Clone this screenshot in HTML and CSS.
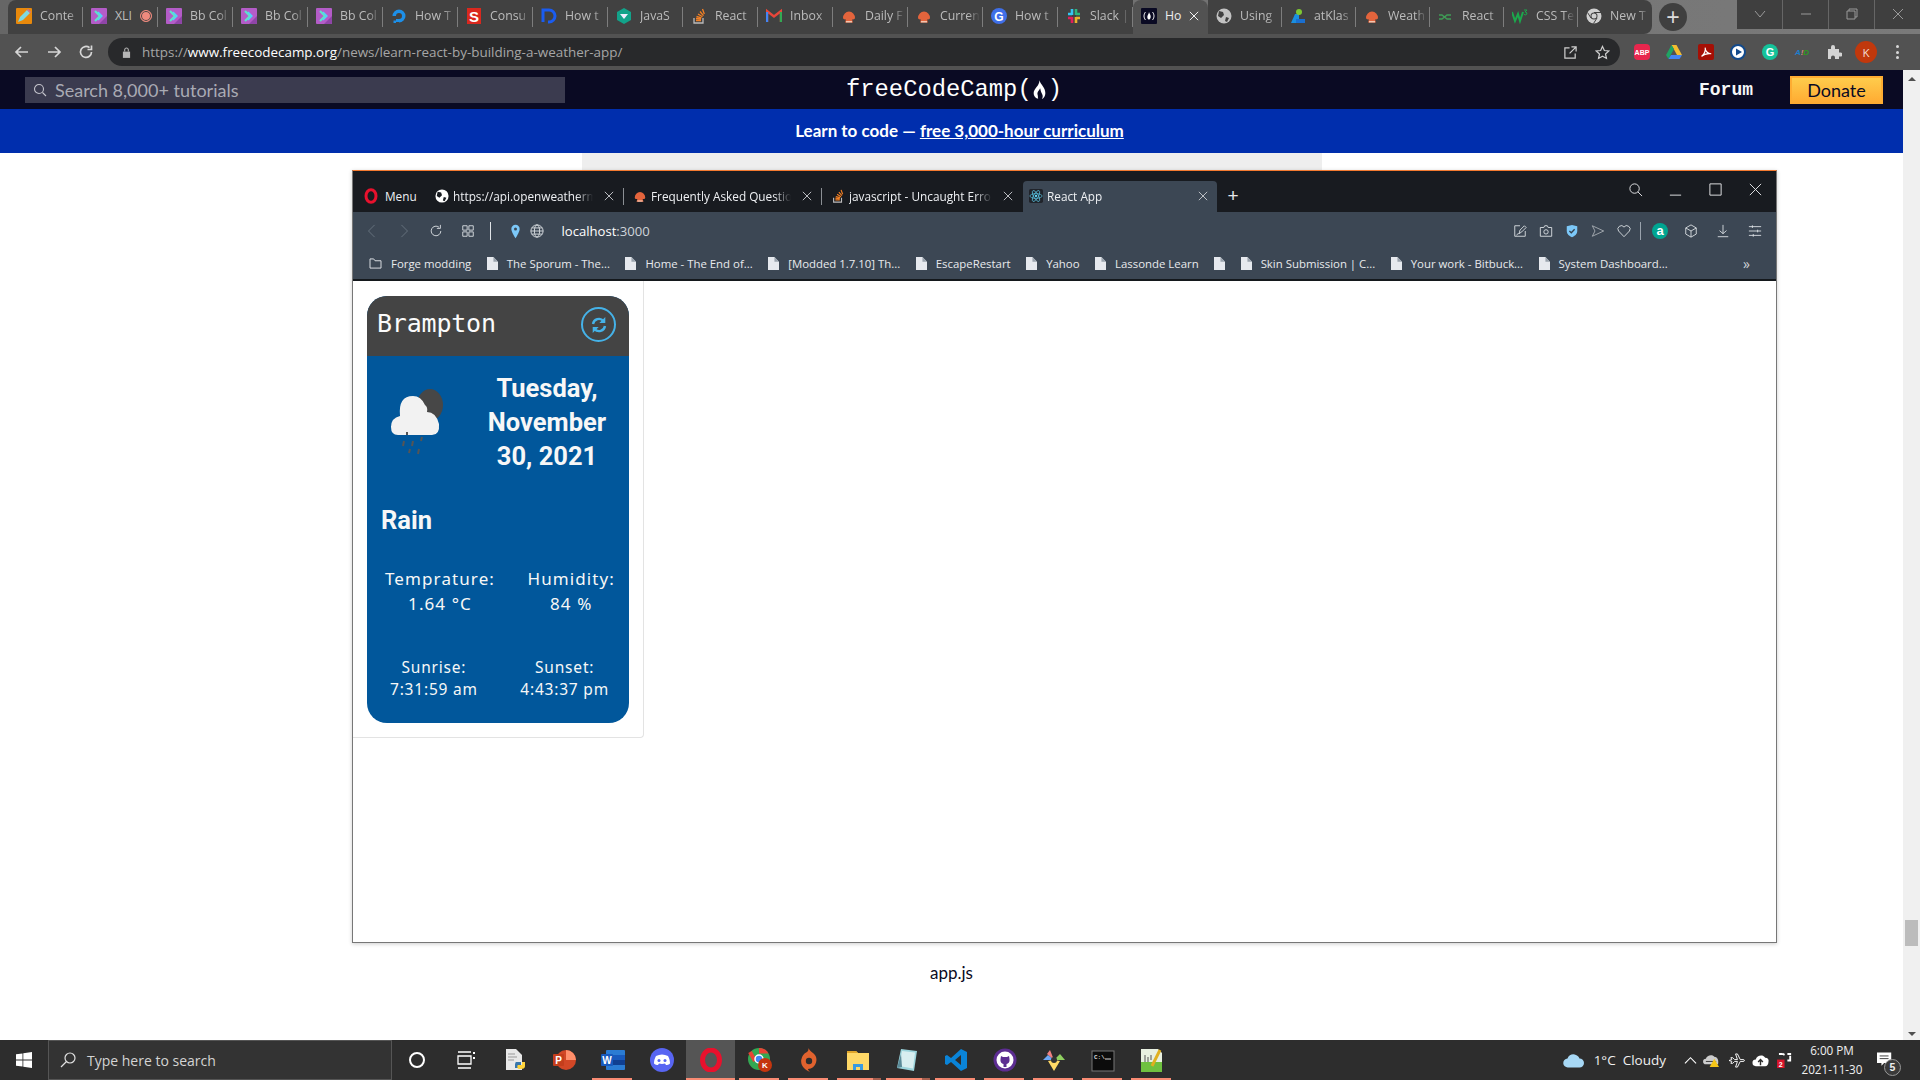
FILE: index.html
```html
<!DOCTYPE html>
<html lang="en">
<head>
<meta charset="utf-8">
<title>Learn React by Building a Weather App</title>
<link rel="stylesheet" href="styles.css">
</head>
<body>
<svg class="defs" width="0" height="0" aria-hidden="true">
  <symbol id="bb" viewBox="0 0 16 16"><rect width="16" height="16" rx="1" fill="#b45cc8"/><path d="M8 16l8-8v7a1 1 0 0 1-1 1z" fill="#8f45a8"/><path d="M4 3l5 5-5 5" fill="none" stroke="#5fe3c8" stroke-width="2.2"/><path d="M7 4l4 4-4 4" fill="none" stroke="#4fd4ff" stroke-width="1.4"/></symbol>
  <symbol id="mush" viewBox="0 0 16 16"><path d="M2 10a6 6.500 0 0 1 12 0c0 1.500-2 1.500-3 1.500l1 3H4l1-3c-1 0-3 0-3-1.500z" fill="#e3643c"/><path d="M5 13h6v1.500H5z" fill="#f3c6b0"/></symbol>
  <symbol id="so" viewBox="0 0 16 16"><path d="M3 10v5h9v-5" fill="none" stroke="#bcbbbb" stroke-width="1.300"/><path d="M5 12.500h5M5 10.500l5 .5M5.500 8.500l5 1.300M7 6l4.500 2.800M9 3.500l3.500 4.200M11.500 1l1.800 5" stroke="#f48024" stroke-width="1.300" fill="none"/></symbol>
  <symbol id="doc" viewBox="0 0 12 14"><path d="M0 0h7l5 5v9H0z" fill="#e6e9ee"/><path d="M7 0l5 5H7z" fill="#9aa3ad"/></symbol>
  <symbol id="x" viewBox="0 0 12 12"><path d="M1 1l10 10M11 1L1 11" stroke="currentColor" stroke-width="1.100" fill="none"/></symbol>
  <symbol id="globe" viewBox="0 0 16 16"><circle cx="8" cy="8" r="7" fill="none" stroke="currentColor" stroke-width="1"/><ellipse cx="8" cy="8" rx="3" ry="7" fill="none" stroke="currentColor" stroke-width="1"/><path d="M1 8h14M2 4.500h12M2 11.500h12" stroke="currentColor" stroke-width="1"/></symbol>
</svg>

<div class="tabstrip">
  <div class="tab first"><svg class="fav" viewBox="0 0 16 16"><rect width="16" height="16" rx="1" fill="#e8890c"/><path d="M2 14l2-5 7-7 3 3-7 7z" fill="#7fd9e0"/><path d="M11 2l3 3 1-1-3-3z" fill="#c86aa8"/></svg><span class="tabtext">Conte</span></div>
  <div class="tab"><svg class="fav"><use href="#bb"/></svg><span class="tabtext short">XLI</span><span class="rec"></span></div>
  <div class="tab"><svg class="fav"><use href="#bb"/></svg><span class="tabtext">Bb Col</span></div>
  <div class="tab"><svg class="fav"><use href="#bb"/></svg><span class="tabtext">Bb Col</span></div>
  <div class="tab"><svg class="fav"><use href="#bb"/></svg><span class="tabtext">Bb Col</span></div>
  <div class="tab"><svg class="fav" viewBox="0 0 16 16"><path d="M8 14.500A6.500 6.500 0 1 0 1.500 8H5a3 3 0 1 1 3 3z" fill="#1d8fe8"/><path d="M5 11h3v3H5zM2.500 12.500H5V15H2.500z" fill="#1d8fe8"/></svg><span class="tabtext">How T</span></div>
  <div class="tab"><svg class="fav" viewBox="0 0 16 16"><rect x="1" width="14" height="16" fill="#d9281e"/><text class="favs" x="8" y="14" text-anchor="middle">S</text></svg><span class="tabtext">Consu</span></div>
  <div class="tab"><svg class="fav" viewBox="0 0 16 16"><path d="M2 14V2h6a6 6 0 0 1 0 12H7" fill="none" stroke="#1a5cf0" stroke-width="3"/></svg><span class="tabtext">How t</span></div>
  <div class="tab"><svg class="fav" viewBox="0 0 16 16"><path d="M8 0l7 4v8l-7 4-7-4V4z" fill="#12a38a"/><path d="M4 6h8l-4 5z" fill="#eef"/></svg><span class="tabtext">JavaS</span></div>
  <div class="tab"><svg class="fav"><use href="#so"/></svg><span class="tabtext">React</span></div>
  <div class="tab"><svg class="fav" viewBox="0 0 16 16"><path d="M1 14V3l7 5.500L15 3v11" fill="none" stroke="#e8463a" stroke-width="2.400"/><path d="M1 14V4" stroke="#4385f4" stroke-width="2.400"/><path d="M15 14V4" stroke="#34a853" stroke-width="2.400"/></svg><span class="tabtext">Inbox</span></div>
  <div class="tab"><svg class="fav"><use href="#mush"/></svg><span class="tabtext">Daily F</span></div>
  <div class="tab"><svg class="fav"><use href="#mush"/></svg><span class="tabtext">Curren</span></div>
  <div class="tab"><svg class="fav" viewBox="0 0 16 16"><circle cx="8" cy="8" r="8" fill="#3f6fe8"/><text class="favg" x="8" y="12.500" text-anchor="middle">G</text></svg><span class="tabtext">How t</span></div>
  <div class="tab"><svg class="fav" viewBox="0 0 16 16"><path d="M6 1v6M2 6h4" stroke="#36c5f0" stroke-width="2.600"/><path d="M10 1v6M10 6h4" stroke="#2eb67d" stroke-width="2.600"/><path d="M10 15V9M10 10h4" stroke="#ecb22e" stroke-width="2.600"/><path d="M6 15V9M2 10h4" stroke="#e01e5a" stroke-width="2.600"/></svg><span class="tabtext">Slack |</span></div>
  <div class="tab active"><svg class="fav" viewBox="0 0 16 16"><rect width="16" height="16" rx="1" fill="#0a0a23"/><path d="M4.500 4c-2 2.500-2 5.500 0 8M11.500 4c2 2.500 2 5.500 0 8" stroke="#fff" fill="none" stroke-width=".9"/><path d="M8 4c.5 2 2 3 1.700 5S8.500 11.500 8 11.500 6.300 11 6.300 9 8 6 8 4z" fill="#fff"/></svg><span class="tabtext short bright">Ho</span><svg class="tabx"><use href="#x"/></svg></div>
  <div class="tab"><svg class="fav" viewBox="0 0 16 16"><circle cx="8" cy="8" r="7.500" fill="#c3c3c3"/><path d="M3 3l4 1 1 3-3 3-3-2zM10 9l3 1-2 4-2-1z" fill="#414141"/></svg><span class="tabtext">Using</span></div>
  <div class="tab"><svg class="fav" viewBox="0 0 16 16"><path d="M1 15l4-9h4v9z" fill="#1a8fe0"/><path d="M6 15V11h9v4z" fill="#1a6fd0"/><circle cx="9" cy="4" r="3" fill="#7ec832"/></svg><span class="tabtext">atKlas</span></div>
  <div class="tab"><svg class="fav"><use href="#mush"/></svg><span class="tabtext">Weath</span></div>
  <div class="tab"><svg class="fav" viewBox="0 0 16 16"><path d="M1 7h3l5 4h4M1 11h3l5-4h4" stroke="#3f9c55" fill="none" stroke-width="1.300"/></svg><span class="tabtext">React</span></div>
  <div class="tab"><svg class="fav" viewBox="0 0 16 16"><path d="M0 4l3 9 3-7 2 7 3-9" stroke="#1ca74c" fill="none" stroke-width="2"/><path d="M12 2h3l-2 2a1.500 1.500 0 1 1-1 2" stroke="#1ca74c" fill="none"/></svg><span class="tabtext">CSS Te</span></div>
  <div class="tab last"><svg class="fav" viewBox="0 0 16 16"><circle cx="8" cy="8" r="7.500" fill="#d0d0d0"/><circle cx="8" cy="8" r="3.500" fill="#414141"/><circle cx="8" cy="8" r="2.500" fill="#d0d0d0"/><path d="M8 4.500h7M5 10L1.500 4.500M11 10l-3.500 5.500" stroke="#414141"/></svg><span class="tabtext">New T</span></div>
  <button class="newtab">+</button>
  <div class="winctl">
    <div class="winbtn"><svg viewBox="0 0 14 14"><path d="M2 4l5 6 5-6" /></svg></div>
    <div class="winbtn"><svg viewBox="0 0 14 14"><path d="M2 7h10"/></svg></div>
    <div class="winbtn"><svg viewBox="0 0 14 14"><path d="M2 4h8v8H2zM4 4V2h8v8h-2"/></svg></div>
    <div class="winbtn"><svg viewBox="0 0 14 14"><path d="M2 2l10 10M12 2L2 12"/></svg></div>
  </div>
</div>

<div class="toolbar">
  <svg class="navic" viewBox="0 0 16 16"><path d="M14 8H2M7 3L2 8l5 5"/></svg>
  <svg class="navic" viewBox="0 0 16 16"><path d="M2 8h12M9 3l5 5-5 5"/></svg>
  <svg class="navic" viewBox="0 0 16 16"><path d="M13.500 8A5.500 5.500 0 1 1 11.500 3.700M13.500 1.500v4h-4"/></svg>
  <div class="omnibox">
    <svg class="lock" viewBox="0 0 10 12"><path d="M1 5h8v7H1z" fill="#b5b5b5"/><path d="M3 5V3a2 2 0 0 1 4 0v2" fill="none" stroke="#b5b5b5" stroke-width="1.200"/></svg>
    <span class="url"><span class="dim">https://</span><span class="host">www.freecodecamp.org</span><span class="dim">/news/learn-react-by-building-a-weather-app/</span></span>
    <span class="spacer"></span>
    <svg class="omni-ic" viewBox="0 0 16 16"><path d="M9 2h5v5M14 2L7 9M7 3H2v11h11V9"/></svg>
    <svg class="omni-ic" viewBox="0 0 16 16"><path d="M8 1.500l2 4.400 4.700.5-3.500 3.200 1 4.700L8 11.900l-4.200 2.400 1-4.700L1.300 6.400 6 5.900z"/></svg>
  </div>
  <div class="exts">
    <span class="ext abp">ABP</span>
    <svg class="ext16" viewBox="0 0 16 16"><path d="M5.500 1h5L16 11h-5z" fill="#f5bd2f"/><path d="M5.500 1L0 11l2.500 4 5.500-10z" fill="#1fa463"/><path d="M2.500 15h11l2.500-4H5z" fill="#4385f4"/></svg>
    <span class="ext pdf"><svg viewBox="0 0 16 16"><path d="M3 13c3-2 5-7 4-10 0 4 3 7 7 7-4-.5-8 0-11 3z" fill="none" stroke="#fff" stroke-width="1.400"/></svg></span>
    <span class="ext play"><svg viewBox="0 0 16 16"><circle cx="8" cy="8" r="7" fill="#fff" stroke="#134a8c" stroke-width="2"/><path d="M6 4.500l6 3.500-6 3.500z" fill="#134a8c"/></svg></span>
    <span class="ext gram">G</span>
    <span class="ext aid"><b class="aid-a">A</b><b class="aid-i">!</b><b class="aid-d">D</b></span>
    <svg class="ext16 puzzle" viewBox="0 0 16 16"><path d="M2 5h3V3a2 2 0 0 1 4 0v2h4v3.500h1.500a2 2 0 0 1 0 4H13V15H9v-1.500a2 2 0 0 0-4 0V15H2z" fill="#d4d4d4"/></svg>
    <span class="ext avatar">K</span>
    <span class="kebab"><i></i><i></i><i></i></span>
  </div>
</div>

<div class="viewport">
  <main class="page">
    <header class="fcc-nav">
      <div class="fcc-search"><svg class="searchic" viewBox="0 0 14 14"><circle cx="6" cy="6" r="4.500"/><path d="M9.500 9.500L13 13"/></svg><span>Search 8,000+ tutorials</span></div>
      <div class="fcc-logo">freeCodeCamp(<svg class="flame" viewBox="0 0 12 18"><path d="M6 1c1 4 5 6 5 11 0 3-2 5-3 5 1-1 1-3 0-4.500C7 11 7 9 6.500 8 6 10 3.500 11 4.500 14c.3 1.500 0 2.500.5 3-2-.5-4-2-4-5C1 8 6 6 6 1z" fill="#fff"/></svg>)</div>
      <div class="fcc-actions"><span class="forum">Forum</span><span class="donate">Donate</span></div>
    </header>
    <div class="banner">Learn to code — <a class="banner-link">free 3,000-hour curriculum</a></div>
    <div class="article">
      <div class="figure-top"></div>
      <div class="shot">
        <div class="o-tabs">
          <div class="o-menu"><svg class="o-logo" viewBox="0 0 14 16"><ellipse cx="7" cy="8" rx="5" ry="6.300" fill="none" stroke="#e8112d" stroke-width="3"/></svg><span>Menu</span></div>
          <div class="o-tab"><svg class="o-fav white" viewBox="0 0 16 16"><circle cx="8" cy="8" r="7.500" fill="#fff"/><path d="M3 3l4 1 1 3-3 3-3-2zM10 9l3 1-2 4-2-1z" fill="#171b20"/></svg><span class="o-text">https://api.openweatherma</span><svg class="o-x"><use href="#x"/></svg></div>
          <div class="o-tab"><svg class="o-fav"><use href="#mush"/></svg><span class="o-text">Frequently Asked Question</span><svg class="o-x"><use href="#x"/></svg></div>
          <div class="o-tab nosep"><svg class="o-fav"><use href="#so"/></svg><span class="o-text">javascript - Uncaught Error</span><svg class="o-x"><use href="#x"/></svg></div>
          <div class="o-tab o-active"><svg class="o-fav" viewBox="0 0 16 16"><rect width="16" height="16" rx="2" fill="#20232a"/><g fill="none" stroke="#61dafb" stroke-width=".7"><ellipse cx="8" cy="8" rx="7" ry="2.700"/><ellipse cx="8" cy="8" rx="7" ry="2.700" transform="rotate(60 8 8)"/><ellipse cx="8" cy="8" rx="7" ry="2.700" transform="rotate(120 8 8)"/></g><circle cx="8" cy="8" r="1.300" fill="#61dafb"/></svg><span class="o-text">React App</span><svg class="o-x"><use href="#x"/></svg></div>
          <span class="o-plus">+</span>
          <span class="spacer"></span>
          <div class="o-win">
            <svg viewBox="0 0 16 16"><circle cx="7" cy="7" r="5"/><path d="M10.500 10.500L15 15"/></svg>
            <svg viewBox="0 0 16 16"><path d="M2 14h12"/></svg>
            <svg viewBox="0 0 16 16"><path d="M2 2h12v12H2z"/></svg>
            <svg viewBox="0 0 16 16"><path d="M2 2l12 12M14 2L2 14"/></svg>
          </div>
        </div>
        <div class="o-toolbar">
          <svg class="o-ic faint" viewBox="0 0 16 16"><path d="M11 1L4 8l7 7"/></svg>
          <svg class="o-ic faint" viewBox="0 0 16 16"><path d="M5 1l7 7-7 7"/></svg>
          <svg class="o-ic" viewBox="0 0 16 16"><path d="M13.500 8A5.500 5.500 0 1 1 11.500 3.700M13 1v4h-4"/></svg>
          <svg class="o-ic" viewBox="0 0 16 16"><path d="M2 2h5v5H2zM9 2h5v5H9zM2 9h5v5H2zM9 9h5v5H9z"/></svg>
          <span class="o-div"></span>
          <svg class="o-ic pin" viewBox="0 0 12 18"><path d="M6 1a5 5 0 0 1 5 5c0 4-5 11-5 11S1 10 1 6a5 5 0 0 1 5-5z" fill="#7cc8f8"/><circle cx="6" cy="6" r="1.800" fill="#3c4754"/></svg>
          <svg class="o-ic globe"><use href="#globe"/></svg>
          <span class="o-url">localhost<span class="o-port">:3000</span></span>
          <span class="spacer"></span>
          <div class="o-right">
            <svg class="o-ic" viewBox="0 0 16 16"><path d="M8 2H2v12h12V8M7 11l1-4 5-5 2 2-5 5zM4 13c1-2 2-2 3-2"/></svg>
            <svg class="o-ic" viewBox="0 0 16 16"><path d="M1.500 4h4l1-2h3l1 2h4v10h-13z"/><circle cx="8" cy="9" r="2.500"/></svg>
            <svg class="o-ic" viewBox="0 0 16 16"><path d="M2 2.500L8 1l6 1.500V8c0 3.500-3 6-6 7-3-1-6-3.500-6-7z" fill="#7cc8f8" stroke="none"/><path d="M5 8l2.200 2L11 6" stroke="#35404c" stroke-width="1.500"/></svg>
            <svg class="o-ic faint2" viewBox="0 0 16 16"><path d="M1.500 2l13 6-13 6 3-6z"/></svg>
            <svg class="o-ic" viewBox="0 0 16 16"><path d="M8 14.500L1.800 8A3.800 3.800 0 0 1 8 3.500 3.800 3.800 0 0 1 14.200 8z"/></svg>
            <span class="o-div2"></span>
            <span class="o-amz">a</span>
            <svg class="o-ic wide" viewBox="0 0 16 16"><path d="M8 1l6 3.500v7L8 15l-6-3.500v-7zM2 4.500L8 8l6-3.500M8 8v7"/></svg>
            <svg class="o-ic wide" viewBox="0 0 16 16"><path d="M8 1v10M4 7.500L8 11l4-3.500M2 14.500h12"/></svg>
            <svg class="o-ic" viewBox="0 0 16 16"><path d="M1 3h14M1 8h14M1 13h14M5 1.500v3M11 6.500v3M6 11.500v3"/></svg>
          </div>
        </div>
        <div class="o-bookmarks">
          <div class="bm"><svg class="bm-folder" viewBox="0 0 14 12"><path d="M1 1h4l1.500 2H13v8H1z" fill="none" stroke="#e6e9ee"/></svg><span>Forge modding</span></div>
          <div class="bm"><svg class="bm-doc"><use href="#doc"/></svg><span>The Sporum - The...</span></div>
          <div class="bm"><svg class="bm-doc"><use href="#doc"/></svg><span>Home - The End of...</span></div>
          <div class="bm"><svg class="bm-doc"><use href="#doc"/></svg><span>[Modded 1.7.10] Th...</span></div>
          <div class="bm"><svg class="bm-doc"><use href="#doc"/></svg><span>EscapeRestart</span></div>
          <div class="bm"><svg class="bm-doc"><use href="#doc"/></svg><span>Yahoo</span></div>
          <div class="bm"><svg class="bm-doc"><use href="#doc"/></svg><span>Lassonde Learn</span></div>
          <div class="bm"><svg class="bm-doc"><use href="#doc"/></svg></div>
          <div class="bm"><svg class="bm-doc"><use href="#doc"/></svg><span>Skin Submission | C...</span></div>
          <div class="bm"><svg class="bm-doc"><use href="#doc"/></svg><span>Your work - Bitbuck...</span></div>
          <div class="bm"><svg class="bm-doc"><use href="#doc"/></svg><span>System Dashboard...</span></div>
          <span class="spacer"></span>
          <span class="bm-more">»</span>
        </div>
        <div class="o-content">
          <section class="outer-card">
            <article class="weather">
              <div class="w-head"><span class="w-city">Brampton</span><span class="w-refresh"><svg viewBox="0 0 20 20"><path d="M4 9a6 6 0 0 1 10.500-3M16 11a6 6 0 0 1-10.500 3" fill="none" stroke="#45b2e8" stroke-width="2.400"/><path d="M16.300 2v6h-6zM3.700 18v-6h6z" fill="#45b2e8"/></svg></span></div>
              <div class="w-body">
                <div class="w-top">
                  <svg class="w-icon" viewBox="0 0 60 70"><ellipse cx="42" cy="17" rx="13" ry="16" fill="#474747"/><path d="M10 47Q3 47 3 39 3 30 12 28 10 8 25 8 33 8 37 17 40 19 39 24 48 24 51 36 52 47 44 47z" fill="#f2f2f2"/><path d="M19 44v3M16 53l-1 5M25 53l-1 5M34 49l-1 4M22 61l-1 4M31 61l-1 5" stroke="#555" stroke-width="2"/></svg>
                  <h2 class="w-date">Tuesday, November 30, 2021</h2>
                </div>
                <h3 class="w-cond">Rain</h3>
                <div class="w-stats">
                  <div class="w-stat"><div>Temprature:</div><div>1.64 °C</div></div>
                  <div class="w-stat"><div>Humidity:</div><div>84 %</div></div>
                </div>
                <div class="w-sun">
                  <div class="w-stat"><div>Sunrise:</div><div>7:31:59 am</div></div>
                  <div class="w-stat"><div>Sunset:</div><div>4:43:37 pm</div></div>
                </div>
              </div>
            </article>
          </section>
        </div>
      </div>
      <p class="caption">app.js</p>
    </div>
  </main>
  <div class="scrollbar">
    <span class="arrow up"></span>
    <span class="thumb"></span>
    <span class="arrow down"></span>
  </div>
</div>

<footer class="taskbar">
  <div class="start"><svg viewBox="0 0 16 16"><path d="M0 2.300L6.500 1.400V7.600H0zM7.300 1.300L16 0v7.600H7.300zM0 8.400h6.500v6.200L0 13.700zM7.300 8.400H16V16l-8.700-1.300z" fill="#fff"/></svg></div>
  <div class="tb-search"><svg viewBox="0 0 16 16"><circle cx="10" cy="6" r="5"/><path d="M6.500 9.500L1 15"/></svg><span>Type here to search</span></div>
  <div class="tb-apps">
    <div class="tb-app"><svg viewBox="0 0 22 24"><circle cx="11" cy="12" r="7" fill="none" stroke="#fff" stroke-width="2"/></svg></div>
    <div class="tb-app"><svg viewBox="0 0 22 24"><path d="M3 4h13M3 20h13M3 8h13v8H3z" fill="none" stroke="#fff" stroke-width="1.300"/><path d="M18 9h2v2h-2zM18 4h2v2h-2z" fill="#fff"/></svg></div>
    <div class="tb-app"><svg viewBox="0 0 22 24"><path d="M2 1h10l6 6v15H2z" fill="#e8e8e8"/><path d="M4 6h7M4 9h9M4 12h6" stroke="#999"/><path d="M12 14h5v3c0 3-1 3-3 3h-3v-3c0-1 .5-3 1-3z" fill="#3776ab"/><path d="M15 21c3 0 6 0 6-3v-4h-3v3h-4c-1 0-1 4 1 4z" fill="#ffd43b"/></svg></div>
    <div class="tb-app"><svg viewBox="0 0 24 24"><circle cx="14" cy="12" r="10" fill="#d24726"/><path d="M14 2a10 10 0 0 1 10 10H14z" fill="#ff8f6b"/><rect x="1" y="6" width="11" height="12" rx="1" fill="#c43e1c"/><text class="tb-letter" x="6.500" y="15.500" text-anchor="middle">P</text></svg></div>
    <div class="tb-app on"><svg viewBox="0 0 24 24"><rect x="5" y="2" width="19" height="20" rx="1" fill="#2b7cd3"/><path d="M5 7h19v5H5z" fill="#185abd"/><path d="M5 12h19v5H5z" fill="#103f91"/><rect x="0" y="6" width="12" height="12" rx="1" fill="#185abd"/><text class="tb-letter" x="6" y="15.500" text-anchor="middle">W</text></svg></div>
    <div class="tb-app"><svg viewBox="0 0 24 24"><circle cx="12" cy="12" r="12" fill="#5865f2"/><path d="M6 8c4-2 8-2 12 0 1.500 2.500 2 5 2 7.500-1 1-3 1.500-4 1.500l-1-1.500c-2 .5-4 .5-6 0L8 17c-1 0-3-.5-4-1.500C4 13 4.500 10.500 6 8z" fill="#fff"/><circle cx="9" cy="12.500" r="1.500" fill="#5865f2"/><circle cx="15" cy="12.500" r="1.500" fill="#5865f2"/></svg></div>
    <div class="tb-app active on"><svg viewBox="0 0 24 24"><ellipse cx="12" cy="12" rx="8.500" ry="10" fill="none" stroke="#e8112d" stroke-width="5"/></svg></div>
    <div class="tb-app on"><svg viewBox="0 0 24 24"><circle cx="11" cy="11" r="11" fill="#34a853"/><path d="M11 0a11 11 0 0 1 9.500 5.500H11z" fill="#ea4335"/><path d="M2 4l5 9" stroke="#ea4335" stroke-width="4"/><circle cx="11" cy="11" r="4" fill="#4285f4" stroke="#fff" stroke-width="1.500"/><circle cx="17" cy="17" r="7" fill="#c5360e"/><text class="tb-k" x="17" y="20" text-anchor="middle">K</text></svg></div>
    <div class="tb-app on"><svg viewBox="0 0 24 24"><path d="M11 0c1 2 0 3-1 4a10 10 0 0 0-2 17c1 1 3 2 5 3-1-1-2-2-2-3a9 9 0 0 0 5-16c-2-1-3-3-5-5z" fill="#e0622e"/><circle cx="12" cy="13" r="3.200" fill="#2d2d2d"/></svg></div>
    <div class="tb-app on more"><svg viewBox="0 0 24 24"><path d="M1 3h9l2 2h11v17H1z" fill="#ffd867"/><path d="M1 3h9l2 2H1z" fill="#e0a52a"/><path d="M7 22v-6h10v6h-3v-3h-4v3z" fill="#3a9ae0"/></svg></div>
    <div class="tb-app on more"><svg viewBox="0 0 24 24"><path d="M6 1l16 2-3 20L2 20z" fill="#9cd4dc"/><path d="M7 3l13 1.500-2 16L4 18z" fill="#d8eef0"/><path d="M2 20L6 6l1 13z" fill="#5a8a98"/></svg></div>
    <div class="tb-app on"><svg viewBox="0 0 24 24"><path d="M17 1l6 3v16l-6 3L7 14l-4 3-2-1V8l2-1 4 3zM17 7l-6 5 6 5z" fill="#0a84d8"/></svg></div>
    <div class="tb-app on"><svg viewBox="0 0 24 24"><circle cx="12" cy="12" r="11.500" fill="#5c2d91"/><circle cx="12" cy="12" r="8.500" fill="#fff"/><path d="M8 8l2 1h4l2-1 .5 3c.5 3-1 4.500-3 5v3h-3v-3c-2-.5-3.500-2-3-5z" fill="#5c2d91"/></svg></div>
    <div class="tb-app on"><svg viewBox="0 0 24 24"><path d="M12 12L5 6l3-4z" fill="#f08080"/><path d="M12 12L1 12l5-5z" fill="#6fa8f5"/><path d="M12 12h11l-5-6z" fill="#8fd060"/><path d="M12 12l-6 1 6 10 6-10z" fill="#ffd966"/><circle cx="12" cy="12" r="3" fill="#333"/></svg></div>
    <div class="tb-app on"><svg viewBox="0 0 24 24"><rect x="1" y="3" width="22" height="20" fill="#0c0c0c" stroke="#777"/><text class="tb-cmd" x="3" y="11">C:\</text><path d="M14 11h6" stroke="#ddd"/></svg></div>
    <div class="tb-app on"><svg viewBox="0 0 24 24"><path d="M1 1h17l4 4v19H1z" fill="#e8f0e0"/><path d="M1 14h21v10H1z" fill="#6fc040"/><path d="M5 7v7M8 9v5M11 7v5" stroke="#555"/><path d="M20 2l-8 16" stroke="#e0b020" stroke-width="3"/></svg></div>
  </div>
  <span class="spacer"></span>
  <div class="tray">
    <svg class="tr-cloud" viewBox="0 0 22 14"><path d="M5 14a4.500 4.500 0 0 1-.5-9C6 1 10 0 13 1.500c2 1 3 2 3.500 3.500a4.500 4.500 0 0 1 0 9z" fill="#a7d8f5"/></svg>
    <span class="tr-weather">1°C&nbsp; Cloudy</span>
    <svg class="tr-ic caret" viewBox="0 0 14 14"><path d="M1 10l6-6 6 6"/></svg>
    <svg class="tr-ic" viewBox="0 0 18 16"><path d="M3 12a3 3 0 0 1 0-6c1-3 6-5 9-2 3 0 5 3 4 8z" fill="#ccc" stroke="none"/><path d="M3 9h11" stroke="#333"/><path d="M12 6l5 9H7z" fill="#f5c518" stroke="none"/></svg>
    <svg class="tr-ic" viewBox="0 0 18 16"><path d="M1 8l3-1L3 5h2l2 2h3L8 1h2l3 6h3c2 0 2 2 0 2h-3l-3 6H8l2-6H7l-2 2H3l1-2z"/></svg>
    <svg class="tr-ic solid" viewBox="0 0 18 14"><path d="M4 13a3.500 3.500 0 0 1 0-7c1-4 7-6 10-2 3 0 4 2 3.500 4 0 3-1.500 5-3.500 5z" fill="#fff"/><path d="M9 12V6M6.500 8.500L9 6l2.500 2.500" stroke="#2d2d2d" stroke-width="1.500" fill="none"/></svg>
    <svg class="tr-ic solid" viewBox="0 0 18 16"><rect y="7" width="8" height="9" fill="#d9152b"/><text class="tr-two" x="4" y="15" text-anchor="middle">2</text><path d="M2 1h4M11 1h4M11 8h4M6 1l2 1M14 3v4" stroke="#fff" stroke-width="2" fill="none"/></svg>
    <div class="clock"><div>6:00 PM</div><div>2021-11-30</div></div>
    <div class="notif"><svg viewBox="0 0 18 16"><path d="M0 0h16v12H8l-3 3v-3H0z" fill="#fff"/><path d="M3 4h10M3 7h10" stroke="#2d2d2d"/></svg><span class="notif-badge">5</span></div>
  </div>
</footer>
</body>
</html>
```

FILE: styles.css
```css
* { box-sizing: border-box; }
html, body { margin: 0; padding: 0; }
body { width: 1920px; height: 1080px; overflow: hidden; display: flex; flex-direction: column; font-family: "Open Sans", "Liberation Sans", sans-serif; background: #fff; }
.defs { position: absolute; }
.spacer { flex: 1; }
svg { display: block; flex: none; }

/* browser tab strip */
.tabstrip { height: 34px; flex: none; display: flex; align-items: flex-start; padding-left: 8px; background: linear-gradient(90deg, #666, #7a7a7a); }
.tab { width: 75px; height: 34px; flex: none; display: flex; align-items: center; padding: 0 3px 3px 8px; gap: 8px; background: #414141; position: relative; overflow: hidden; }
.tab.active ~ .tab { width: 74px; }
.tab::after { content: ""; position: absolute; right: 0; top: 7px; height: 20px; width: 1px; background: #7d7d7d; }
.tab.first { border-top-left-radius: 8px; }
.tab.last { border-bottom-right-radius: 8px; border-top-right-radius: 8px; }
.tab.last::after, .tab.active::after { display: none; }
.tab.active { background: #525252; border-radius: 8px 8px 0 0; }
.fav { width: 16px; height: 16px; }
.tabtext { font-size: 12.3px; color: #bcbcbc; white-space: nowrap; flex: 1; -webkit-mask-image: linear-gradient(90deg, #000 70%, transparent); mask-image: linear-gradient(90deg, #000 70%, transparent); }
.tabtext.short { -webkit-mask-image: none; mask-image: none; }
.tabtext.bright { color: #eee; }
.rec { width: 12px; height: 12px; border-radius: 50%; background: #ef8a7e; border: 1px solid #ef8a7e; box-shadow: inset 0 0 0 1px #414141; flex: none; margin-right: 5px; }
.tabx { width: 10px; height: 10px; color: #fff; margin-right: 8.5px; }
.favs { font: 700 15px "Liberation Sans", sans-serif; fill: #fff; }
.favg { font: 700 12px "Liberation Sans", sans-serif; fill: #fff; }
.newtab { width: 28px; height: 28px; margin: 3px 0 0 7px; border: 0; border-radius: 50%; background: #3f3f3f; color: #ddd; font: 400 23px/26px "Liberation Sans", sans-serif; padding: 0; flex: none; }
.winctl { margin-left: auto; display: flex; height: 29px; background: #3f3f3f; width: 183px; }
.winbtn { flex: 1; display: flex; align-items: center; justify-content: center; border-right: 1px solid #666; padding-bottom: 1px; }
.winbtn:last-child { border-right: 0; }
.winbtn svg { width: 14px; height: 14px; fill: none; stroke: #9a9a9a; stroke-width: 1; }

/* browser toolbar */
.toolbar { height: 36px; flex: none; background: #525252; display: flex; align-items: center; padding-left: 14px; }
.navic { width: 16px; height: 16px; margin-right: 16px; fill: none; stroke: #d6d6d6; stroke-width: 1.700; }
.omnibox { width: 1512px; margin-left: -2px; height: 28px; border-radius: 14px; background: #28292b; display: flex; align-items: center; padding: 0 10.5px 0 14px; }
.lock { width: 9px; height: 11px; margin-right: 11px; }
.url { font-size: 13.45px; color: #fff; white-space: nowrap; }
.dim { color: #a6a6a6; }
.omni-ic { width: 15px; height: 15px; margin-left: 17px; fill: none; stroke: #cfcfcf; stroke-width: 1.300; }
.exts { display: flex; align-items: center; margin-left: 10px; gap: 8px; }
.ext { width: 24px; height: 24px; flex: none; display: flex; align-items: center; justify-content: center; }
.ext16 { width: 16px; height: 16px; margin: 0 4px; }
.abp { width: 16px; height: 16px; margin: 0 4px; border-radius: 4px; background: #e8264d; color: #fff; font: 700 7px "Liberation Sans", sans-serif; }
.pdf { width: 16px; height: 16px; margin: 0 4px; background: #a50f05; border-radius: 2px; }
.pdf svg { width: 14px; height: 14px; }
.play { width: 16px; height: 16px; margin: 0 4px; }
.play svg { width: 16px; height: 16px; }
.gram { width: 16px; height: 16px; margin: 0 4px; border-radius: 50%; background: #15c39a; color: #fff; font: 700 11px "Liberation Sans", sans-serif; }
.aid { width: 16px; margin: 0 4px; font: italic 700 8px "Liberation Sans", sans-serif; }
.aid-a { color: #1a7fd0; } .aid-i { color: #c88; } .aid-d { color: #2f9a1f; }
.avatar { border-radius: 50%; background: #c1380c; color: #f4dcd0; font-size: 11.500px; width: 22px; height: 22px; margin-left: 1px; }
.kebab { display: flex; flex-direction: column; gap: 2.500px; width: 4px; margin-left: 11px; }
.kebab i { width: 3px; height: 3px; border-radius: 50%; background: #d8d8d8; }

/* page */
.viewport { flex: 1; min-height: 0; display: flex; }
.page { flex: 1; min-width: 0; display: flex; flex-direction: column; background: #fff; }
.fcc-nav { height: 39px; flex: none; background: #0a0a23; display: grid; grid-template-columns: 1fr auto 1fr; align-items: center; padding: 0 20px 0 25px; }
.fcc-search { width: 540px; height: 26px; background: #3b3b4f; display: flex; align-items: center; gap: 8px; padding-left: 8px; color: #a9aab4; font: 400 18px "Lato", sans-serif; }
.searchic { width: 14px; height: 14px; fill: none; stroke: #c4c4cc; stroke-width: 1.100; }
.fcc-logo { font: 400 23.800px "Liberation Mono", monospace; color: #fff; display: flex; align-items: center; }
.flame { width: 15px; height: 21px; margin: 0 .5px; }
.fcc-actions { display: flex; justify-content: flex-end; align-items: center; gap: 37px; }
.forum { font: 700 18px "Liberation Mono", monospace; color: #f5f6f7; margin-top: 1px; }
.donate { width: 93px; height: 28px; background: linear-gradient(#fecc4c, #ffac33); border: 2px solid #feac32; color: #0a0a23; font: 400 18px/24px "Lato", sans-serif; text-align: center; }
.banner { height: 44px; flex: none; background: #002ead; color: #fff; font: 700 17px/44px "Lato", sans-serif; text-align: center; padding-left: 16px; }
.banner-link { text-decoration: underline; }
.article { flex: 1; min-height: 0; display: flex; flex-direction: column; }
.figure-top { width: 740px; height: 17px; margin-left: 582px; background: #eee; flex: none; }
.shot { width: 1425px; height: 773px; margin-left: 352px; flex: none; display: flex; flex-direction: column; border: 1px solid #777; border-top: 1px solid #f47a30; box-shadow: 0 1px 4px rgba(0,0,0,.2); background: #fff; }
.caption { margin: 19px 0 0; text-align: center; font: 400 17px "Lato", sans-serif; color: #0a0a23; }

/* inner Opera window */
.o-tabs { height: 41px; flex: none; background: #181b20; display: flex; align-items: flex-end; color: #eef0f3; font-size: 11.800px; padding-left: 11px; }
.o-menu { height: 31px; width: 62px; flex: none; display: flex; align-items: center; gap: 7px; padding-bottom: 1px; }
.o-logo { width: 14px; height: 16px; }
.o-tab { width: 198px; height: 31px; flex: none; display: flex; align-items: center; gap: 4px; padding: 0 10px 2px 9px; position: relative; }
.o-tab::after { content: ""; position: absolute; right: 0; top: 7px; height: 17px; width: 1px; background: #8b8f94; }
.o-tab.nosep::after, .o-active::after { display: none; }
.o-tab.nosep { width: 201px; }
.o-tab.o-active { background: #3c4754; border-radius: 4px 4px 0 0; width: 193.500px; padding-left: 6px; padding-right: 8.500px; }
.o-fav { width: 14px; height: 14px; }
.o-text { flex: 1; min-width: 0; white-space: nowrap; -webkit-mask-image: linear-gradient(90deg, #000 88%, transparent); mask-image: linear-gradient(90deg, #000 88%, transparent); }
.o-x { width: 10px; height: 10px; color: #c9ccd0; margin-left: 7px; }
.o-plus { margin-left: 11px; height: 31px; font: 300 19px/29px "Liberation Sans", sans-serif; color: #e6e8ea; }
.o-win { align-self: flex-start; display: flex; gap: 25px; padding: 11px 13px 0 0; }
.o-win svg { width: 15px; height: 15px; fill: none; stroke: #e6e8ea; stroke-width: 1; }
.o-toolbar { height: 38px; flex: none; background: #3c4754; display: flex; align-items: center; padding-left: 12px; color: #e8eaed; }
.o-ic { width: 14px; height: 14px; fill: none; stroke: #dfe3e7; stroke-width: 1; margin-right: 18px; }
.o-ic.faint { stroke: #6d7782; }
.o-ic.faint2 { stroke: #aab0b6; }
.o-ic.globe { color: #dfe3e7; stroke: none; margin-right: 18px; }
.o-ic.pin { stroke: none; width: 11px; height: 15px; margin-right: 9px; margin-left: 3px; }
.o-div { width: 1px; height: 18px; background: #dfe3e7; margin: 0 15.500px 0 -3px; }
.o-div2 { width: 1px; height: 18px; background: #9aa3ad; margin: 0 11px 0 -3px; }
.o-url { font-size: 13.100px; color: #fff; }
.o-port { color: #cfd4d9; }
.o-right { display: flex; align-items: center; margin-right: 2px; }
.o-right .o-ic { margin-right: 12px; }
.o-right .o-ic.wide { margin-right: 18px; }
.o-amz { width: 16px; height: 16px; border-radius: 50%; background: #00a591; color: #fff; font: 700 13px/15px "Liberation Sans", sans-serif; text-align: center; margin-right: 16px; }
.o-bookmarks { height: 31px; flex: none; background: #3c4754; border-bottom: 2px solid #14181c; display: flex; align-items: center; padding: 0 0 2px 16px; gap: 15.500px; color: #e8eaed; font-size: 11.400px; }
.bm { display: flex; align-items: center; gap: 9px; white-space: nowrap; flex: none; }
.bm-folder { width: 13px; height: 11px; }
.bm-doc { width: 11px; height: 13px; }
.bm-more { font-size: 14px; margin-right: 26px; color: #cfd4d9; }
.o-content { flex: 1; min-height: 0; padding: 0; background: #fff; }

/* weather card */
.outer-card { width: 291px; height: 457px; padding: 15px 14px 14px 14px; background: #fff; border: 1px solid #e3e3e3; border-top: 0; border-left: 0; border-radius: 0 0 4px 0; }
.weather { width: 262px; height: 427px; border-radius: 20px; overflow: hidden; background: #01579b; color: #f7f7f7; display: flex; flex-direction: column; font-family: "Noto Sans", sans-serif; }
.w-head { height: 60px; flex: none; background: #444; display: flex; align-items: center; justify-content: space-between; padding: 0 13px 3px 10px; }
.w-city { font: 400 25px "DejaVu Sans Mono", monospace; letter-spacing: -.2px; color: #fbfbfb; margin-top: -2px; }
.w-refresh { width: 35px; height: 35px; border-radius: 50%; border: 2px solid #45b2e8; display: flex; align-items: center; justify-content: center; }
.w-refresh svg { width: 20px; height: 20px; }
.w-body { flex: 1; display: flex; flex-direction: column; }
.w-top { display: flex; padding: 15px 0 0 21px; align-items: flex-start; }
.w-icon { width: 60px; height: 70px; margin-top: 17px; }
.w-date { flex: 1; margin: 0; font-family: Roboto, sans-serif; font-size: 25.500px; font-weight: 700; line-height: 34px; text-align: center; padding: 0 8px 0 25px; }
.w-cond { margin: 30px 0 0 14px; font-family: Roboto, sans-serif; font-size: 25.500px; font-weight: 700; line-height: 34px; }
.w-stats { display: flex; justify-content: space-between; margin-top: 29px; padding: 0 14px 0 18px; font-size: 17px; line-height: 25px; letter-spacing: 1.100px; }
.w-sun { display: flex; justify-content: space-between; margin-top: 39.500px; padding: 0 20px 0 23px; font-size: 15.500px; line-height: 22px; letter-spacing: .8px; }
.w-stat { text-align: center; }

/* scrollbar */
.scrollbar { width: 17px; flex: none; background: #f0f0f0; display: flex; flex-direction: column; align-items: center; padding: 7px 0 4px; }
.arrow { width: 0; height: 0; border-left: 4px solid transparent; border-right: 4px solid transparent; flex: none; }
.arrow.up { border-bottom: 4px solid #505050; }
.arrow.down { border-top: 4px solid #505050; margin-top: auto; }
.thumb { width: 13px; height: 26px; background: #bcbcbc; margin-top: 839px; flex: none; }

/* taskbar */
.taskbar { height: 40px; flex: none; background: #2d2d2d; display: flex; align-items: center; color: #fff; }
.start { width: 48px; height: 40px; flex: none; display: flex; align-items: center; justify-content: center; }
.start svg { width: 16px; height: 16px; }
.tb-search { width: 344px; height: 40px; flex: none; display: flex; align-items: center; gap: 11px; padding-left: 11px; background: #333; border: 1px solid #555; color: #d4d4d4; font-size: 14px; }
.tb-search svg { width: 16px; height: 16px; fill: none; stroke: #e0e0e0; stroke-width: 1.200; }
.tb-apps { display: flex; height: 40px; margin-left: 0; }
.tb-app { width: 49px; height: 40px; flex: none; display: flex; align-items: center; justify-content: center; position: relative; padding-bottom: 1px; }
.tb-app svg { width: 24px; height: 24px; }
.tb-app.on::after { content: ""; position: absolute; left: 4px; right: 5px; bottom: 0; height: 2px; background: #f98b73; }
.tb-app.active { background: #555; }
.tb-app.active::after { left: 0; right: 0; }
.tb-app.more::before { content: ""; position: absolute; right: 1px; bottom: 0; height: 2px; width: 8px; background: #a8604f; z-index: 1; }
.tb-letter { font: 700 10px "Liberation Sans", sans-serif; fill: #fff; }
.tb-k { font: 700 8px "Liberation Sans", sans-serif; fill: #fff; }
.tb-cmd { font: 700 6px "Liberation Mono", monospace; fill: #ddd; }
.tray { display: flex; align-items: center; height: 40px; padding-right: 19px; }
.tr-cloud { width: 22px; height: 15px; margin-right: 9px; }
.tr-weather { font-size: 13.500px; color: #f0f0f0; margin-right: 18px; white-space: nowrap; }
.tr-ic { width: 17px; height: 15px; margin-right: 7.500px; fill: none; stroke: #fff; stroke-width: 1; }
.tr-ic.caret { width: 13px; height: 13px; margin-right: 6px; stroke-width: 1.200; }
.tr-ic.solid { stroke: none; }
.tr-two { font: 700 7.500px "Liberation Sans", sans-serif; fill: #fff; }
.clock { width: 68px; margin: 0 0 0 -3px; text-align: center; font-size: 11.700px; line-height: 19px; color: #f0f0f0; white-space: nowrap; }
.notif { width: 26px; height: 26px; position: relative; margin-left: 9px; }
.notif svg { width: 16px; height: 15px; position: absolute; left: 2px; top: 5px; }
.notif-badge { position: absolute; left: 9px; top: 12px; width: 17px; height: 17px; border-radius: 50%; background: #3a3a3a; border: 1px solid #999; color: #eee; font: 700 10.500px/15px "Liberation Sans", sans-serif; text-align: center; }
```
